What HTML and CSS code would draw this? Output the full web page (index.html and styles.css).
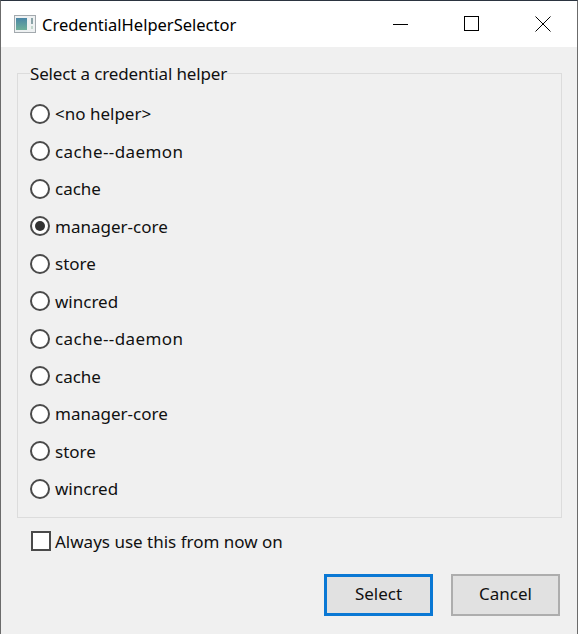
FILE: index.html
```html
<!DOCTYPE html>
<html lang="en">
<head>
    <meta charset="UTF-8">
    <title>CredentialHelperSelector</title>
    <link rel="stylesheet" href="styles.css">
</head>
<body>
    <div class="window">
        <div class="titlebar">
            <svg class="app-icon" width="22" height="18" viewBox="0 0 22 18">
                <defs>
                    <linearGradient id="pane" x1="0" y1="0" x2="0" y2="1">
                        <stop offset="0" stop-color="#4a86a6"/>
                        <stop offset="1" stop-color="#6fb09a"/>
                    </linearGradient>
                </defs>
                <rect x="0.5" y="0.5" width="21" height="17" fill="#eef1f2" stroke="#a3a9ae"/>
                <rect x="2" y="3" width="11" height="12" fill="url(#pane)"/>
                <rect x="17" y="3" width="2" height="6" fill="#8aa3a8"/>
                <rect x="17" y="11" width="2" height="3" fill="#c2d6cb"/>
            </svg>
            <span class="title">CredentialHelperSelector</span>
            <div class="controls">
                <svg class="control" width="16" height="16" viewBox="0 0 16 16"><path d="M0 8.5H15" stroke="#000" fill="none"/></svg>
                <svg class="control" width="16" height="16" viewBox="0 0 16 16"><rect x="0.5" y="0.5" width="14" height="14" stroke="#000" fill="none"/></svg>
                <svg class="control" width="16" height="16" viewBox="0 0 16 16"><path d="M0.5 0.5L15.5 15.5M15.5 0.5L0.5 15.5" stroke="#000" fill="none"/></svg>
            </div>
        </div>
        <div class="content">
            <fieldset class="group">
                <legend>Select a credential helper</legend>
                <div class="option"><span class="radio"></span>&lt;no helper&gt;</div>
                <div class="option option-wide"><span class="radio"></span>cache--daemon</div>
                <div class="option"><span class="radio"></span>cache</div>
                <div class="option"><span class="radio checked"></span>manager-core</div>
                <div class="option"><span class="radio"></span>store</div>
                <div class="option"><span class="radio"></span>wincred</div>
                <div class="option option-wide"><span class="radio"></span>cache--daemon</div>
                <div class="option"><span class="radio"></span>cache</div>
                <div class="option"><span class="radio"></span>manager-core</div>
                <div class="option"><span class="radio"></span>store</div>
                <div class="option"><span class="radio"></span>wincred</div>
            </fieldset>
            <div class="always"><span class="checkbox"></span>Always use this from now on</div>
            <div class="buttons">
                <div class="btn btn-default">Select</div>
                <div class="btn">Cancel</div>
            </div>
        </div>
    </div>
</body>
</html>
```

FILE: styles.css
```css
* {
    padding: 0;
    margin: 0;
    box-sizing: border-box;
}
html, body {
    height: 100%;
}
body {
    font-family: "Noto Sans", "Open Sans", sans-serif;
    font-size: 17px;
    color: #111;
    background: #f0f0f0;
}
.window {
    height: 634px;
    display: flex;
    flex-direction: column;
    border-left: 1px solid #6b6b6b;
    border-right: 1px solid #6b6b6b;
    border-top: 1px solid #2b3440;
}
.titlebar {
    height: 46px;
    flex: none;
    background: #fff;
    display: flex;
    align-items: center;
    padding-left: 13px;
}
.app-icon {
    margin-right: 6px;
}
.title {
    color: #000;
    font-size: 16.5px;
}
.controls {
    margin-left: auto;
    display: flex;
    gap: 55px;
    padding-right: 26px;
}
.content {
    flex: 1;
    padding: 15px 15px 0 16px;
    display: flex;
    flex-direction: column;
}
.group {
    height: 456px;
    border: 1px solid #dcdcdc;
    padding: 10px 12px 0;
    display: flex;
    flex-direction: column;
}
.group legend {
    letter-spacing: -0.15px;
    line-height: 23px;
}
.option {
    height: 37.5px;
    display: flex;
    align-items: center;
    flex: none;
}
.option-wide {
    letter-spacing: 0.4px;
}
.radio {
    width: 20px;
    height: 20px;
    margin-right: 5px;
    border: 2px solid #4a4a4a;
    border-radius: 50%;
    background: #fff;
    display: flex;
    align-items: center;
    justify-content: center;
}
.radio.checked::after {
    content: "";
    width: 10px;
    height: 10px;
    border-radius: 50%;
    background: #333;
}
.always {
    display: flex;
    align-items: center;
    margin: 12px 0 0 14px;
    height: 22px;
}
.checkbox {
    width: 20px;
    height: 20px;
    margin-right: 4px;
    border: 2px solid #4a4a4a;
    background: #fff;
}
.buttons {
    display: flex;
    justify-content: flex-end;
    gap: 18px;
    margin-top: 22px;
    padding-right: 2px;
}
.btn {
    width: 109px;
    height: 42px;
    padding-bottom: 3px;
    background: #e1e1e1;
    border: 2px solid #adadad;
    display: flex;
    align-items: center;
    justify-content: center;
}
.btn-default {
    border: 3px solid #0a78d4;
}
```
